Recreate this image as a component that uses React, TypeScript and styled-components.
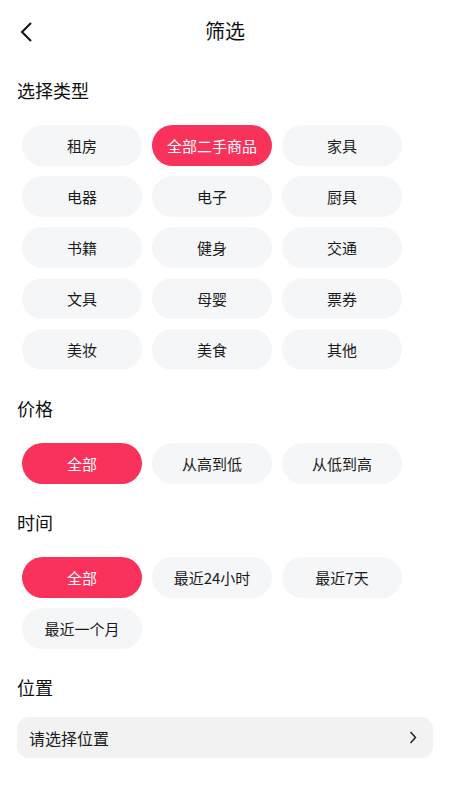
import React, { useState } from "react";
import styled, { createGlobalStyle } from "styled-components";

const GlobalStyle = createGlobalStyle`
  html, body {
    margin: 0;
    padding: 0;
    background: #fff;
    font-family: "Noto Sans CJK SC", "Noto Sans", sans-serif;
    color: #1a1a1a;
  }
`;

const RED = "#F8325A";

const Page = styled.div`
  width: 450px;
  min-height: 800px;
  background: #fff;
`;

const Header = styled.div`
  position: relative;
  height: 62px;
  display: flex;
  align-items: center;
  justify-content: center;
`;

const BackButton = styled.button`
  position: absolute;
  left: 14px;
  top: 18px;
  width: 24px;
  height: 28px;
  border: 0;
  padding: 0;
  background: none;
  display: flex;
  align-items: center;
  justify-content: center;
`;

const Title = styled.div`
  font-size: 20px;
  line-height: 24px;
  color: #111;
`;

const Body = styled.div`
  padding: 0 17px;
`;

const SectionTitle = styled.div`
  font-size: 18px;
  line-height: 24px;
  color: #111;
  padding: 16px 0 18px;
`;

const ChipGrid = styled.div`
  display: grid;
  grid-template-columns: repeat(3, 130px);
  margin-bottom: 5px;
`;

const Chip = styled.button<{ $active?: boolean }>`
  margin: 5px;
  height: 41px;
  border: 0;
  border-radius: 21px;
  padding: 0;
  font-family: inherit;
  font-size: 15px;
  background: ${(p) => (p.$active ? RED : "#F5F6F8")};
  color: ${(p) => (p.$active ? "#fff" : "#1a1a1a")};
  cursor: pointer;
`;

const LocationBox = styled.div`
  height: 41px;
  border-radius: 12px;
  background: #F2F2F2;
  display: flex;
  align-items: center;
  justify-content: space-between;
  padding: 0 16px 0 12px;
  font-size: 16px;
  color: #1a1a1a;
`;

const types = [
  "租房", "全部二手商品", "家具",
  "电器", "电子", "厨具",
  "书籍", "健身", "交通",
  "文具", "母婴", "票券",
  "美妆", "美食", "其他",
];
const prices = ["全部", "从高到低", "从低到高"];
const times = ["全部", "最近24小时", "最近7天", "最近一个月"];

const Group = ({
  items,
  value,
  onPick,
}: {
  items: string[];
  value: string;
  onPick: (v: string) => void;
}) => (
  <ChipGrid>
    {items.map((it) => (
      <Chip key={it} $active={it === value} onClick={() => onPick(it)}>
        {it}
      </Chip>
    ))}
  </ChipGrid>
);

export default function App() {
  const [type, setType] = useState("全部二手商品");
  const [price, setPrice] = useState("全部");
  const [time, setTime] = useState("全部");

  return (
    <Page>
      <GlobalStyle />
      <Header>
        <BackButton aria-label="back">
          <svg width="16" height="22" viewBox="0 0 16 22" fill="none">
            <path d="M13 2 L4 11 L13 20" stroke="#111" strokeWidth="2" />
          </svg>
        </BackButton>
        <Title>筛选</Title>
      </Header>
      <Body>
        <SectionTitle>选择类型</SectionTitle>
        <Group items={types} value={type} onPick={setType} />
        <SectionTitle>价格</SectionTitle>
        <Group items={prices} value={price} onPick={setPrice} />
        <SectionTitle>时间</SectionTitle>
        <Group items={times} value={time} onPick={setTime} />
        <SectionTitle>位置</SectionTitle>
        <LocationBox>
          <span>请选择位置</span>
          <svg width="8" height="13" viewBox="0 0 8 13" fill="none">
            <path d="M1.5 1 L6.5 6.5 L1.5 12" stroke="#222" strokeWidth="1.5" />
          </svg>
        </LocationBox>
      </Body>
    </Page>
  );
}
